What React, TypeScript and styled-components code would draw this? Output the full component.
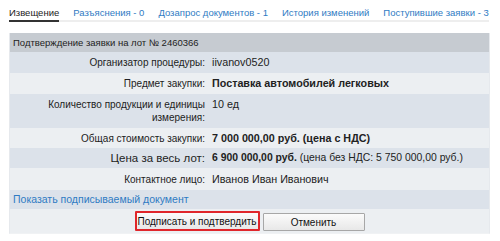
import React from "react";
import styled, { createGlobalStyle } from "styled-components";

const Global = createGlobalStyle`
  html, body { margin: 0; padding: 0; background: #fff; }
  body { font-family: "Liberation Sans", Arial, sans-serif; font-size: 10px; color: #222; }
`;

const Page = styled.div`
  width: 500px;
  padding: 0 10px 0 9px;
  box-sizing: border-box;
`;

const Tabs = styled.nav`
  display: flex;
  gap: 14px;
  height: 20px;
  border-bottom: 2px solid #eeeeee;
  margin-right: 1px;
`;

const Tab = styled.a<{ $active?: boolean }>`
  display: block;
  font-size: 9.5px;
  line-height: 14px;
  padding-top: 6px;
  color: ${(p) => (p.$active ? "#222" : "#2f7bc3")};
  border-bottom: 2px solid ${(p) => (p.$active ? "#333" : "transparent")};
  margin-bottom: -2px;
  text-decoration: none;
  white-space: nowrap;
`;

const Panel = styled.section`
  margin-top: 11px;
  width: 481px;
  box-sizing: border-box;
  border-left: 1px solid #e6e9ed;
  border-right: 1px solid #e6e9ed;
  border-bottom: 1px solid #f0f2f4;
`;

const Header = styled.div`
  background: #c6cbd1;
  height: 19px;
  line-height: 19px;
  padding-left: 3px;
  font-size: 9.5px;
  color: #222;
`;

const Row = styled.div<{ $shade: "dark" | "light"; $h: number }>`
  display: grid;
  grid-template-columns: 198px 1fr;
  background: ${(p) => (p.$shade === "dark" ? "#dce2ea" : "#eceff2")};
  min-height: ${(p) => p.$h}px;
  align-items: start;
`;

const Label = styled.div<{ $big?: boolean; $pt: number }>`
  text-align: right;
  padding: ${(p) => p.$pt}px 3px 0 20px;
  font-size: ${(p) => (p.$big ? "11.5px" : "10px")};
  line-height: ${(p) => (p.$big ? "14px" : "13px")};
  color: #222;
`;

const Value = styled.div<{ $big?: boolean; $pt: number }>`
  padding: ${(p) => p.$pt}px 0 0 4px;
  font-size: ${(p) => (p.$big ? "10.4px" : "10.75px")};
  line-height: ${(p) => (p.$big ? "14px" : "13px")};
  color: #222;
  white-space: nowrap;
`;

const Bold = styled.b`
  font-weight: bold;
`;

const LinkRow = styled.div`
  background: #dce2ea;
  height: 19px;
  line-height: 19px;
  padding-left: 3px;
`;

const DocLink = styled.a`
  color: #2f7bc3;
  text-decoration: none;
  font-size: 10.5px;
`;

const Actions = styled.div`
  background: #eceff2;
  height: 24px;
  box-sizing: border-box;
  padding-bottom: 2px;
  display: flex;
  justify-content: center;
  align-items: flex-end;
  gap: 3px;
`;

const Button = styled.button<{ $primary?: boolean; $w: number }>`
  font-family: "Liberation Sans", Arial, sans-serif;
  font-size: 10px;
  color: #111;
  width: ${(p) => p.$w}px;
  height: ${(p) => (p.$primary ? 20 : 18)}px;
  padding: 0;
  box-sizing: border-box;
  background: linear-gradient(#fbfbfb, #e8e8e8);
  border: ${(p) => (p.$primary ? "2px solid #e0262b" : "1px solid #a7a7a7")};
  border-radius: 1px;
`;

const rows = [
  { label: "Организатор процедуры:", value: <>iivanov0520</>, shade: "dark" as const, h: 21, pt: 4 },
  { label: "Предмет закупки:", value: <Bold>Поставка автомобилей легковых</Bold>, shade: "light" as const, h: 21, pt: 4 },
  { label: "Количество продукции и единицы измерения:", value: <>10 ед</>, shade: "dark" as const, h: 34, pt: 4 },
  { label: "Общая стоимость закупки:", value: <Bold>7 000 000,00 руб. (цена с НДС)</Bold>, shade: "light" as const, h: 20, pt: 4 },
];

export default function App() {
  return (
    <Page>
      <Global />
      <Tabs>
        <Tab $active>Извещение</Tab>
        <Tab>Разъяснения - 0</Tab>
        <Tab>Дозапрос документов - 1</Tab>
        <Tab>История изменений</Tab>
        <Tab>Поступившие заявки - 3</Tab>
      </Tabs>
      <Panel>
        <Header>Подтверждение заявки на лот № 2460366</Header>
        {rows.map((r) => (
          <Row key={r.label} $shade={r.shade} $h={r.h}>
            <Label $pt={r.pt}>{r.label}</Label>
            <Value $pt={r.pt}>{r.value}</Value>
          </Row>
        ))}
        <Row $shade="dark" $h={20}>
          <Label $big $pt={3}>Цена за весь лот:</Label>
          <Value $big $pt={3}>
            <Bold>6 900 000,00 руб.</Bold> (цена без НДС: 5 750 000,00 руб.)
          </Value>
        </Row>
        <Row $shade="light" $h={22}>
          <Label $pt={5}>Контактное лицо:</Label>
          <Value $pt={5}>Иванов Иван Иванович</Value>
        </Row>
        <LinkRow>
          <DocLink>Показать подписываемый документ</DocLink>
        </LinkRow>
        <Actions>
          <Button $primary $w={125}>Подписать и подтвердить</Button>
          <Button $w={102}>Отменить</Button>
        </Actions>
      </Panel>
    </Page>
  );
}
